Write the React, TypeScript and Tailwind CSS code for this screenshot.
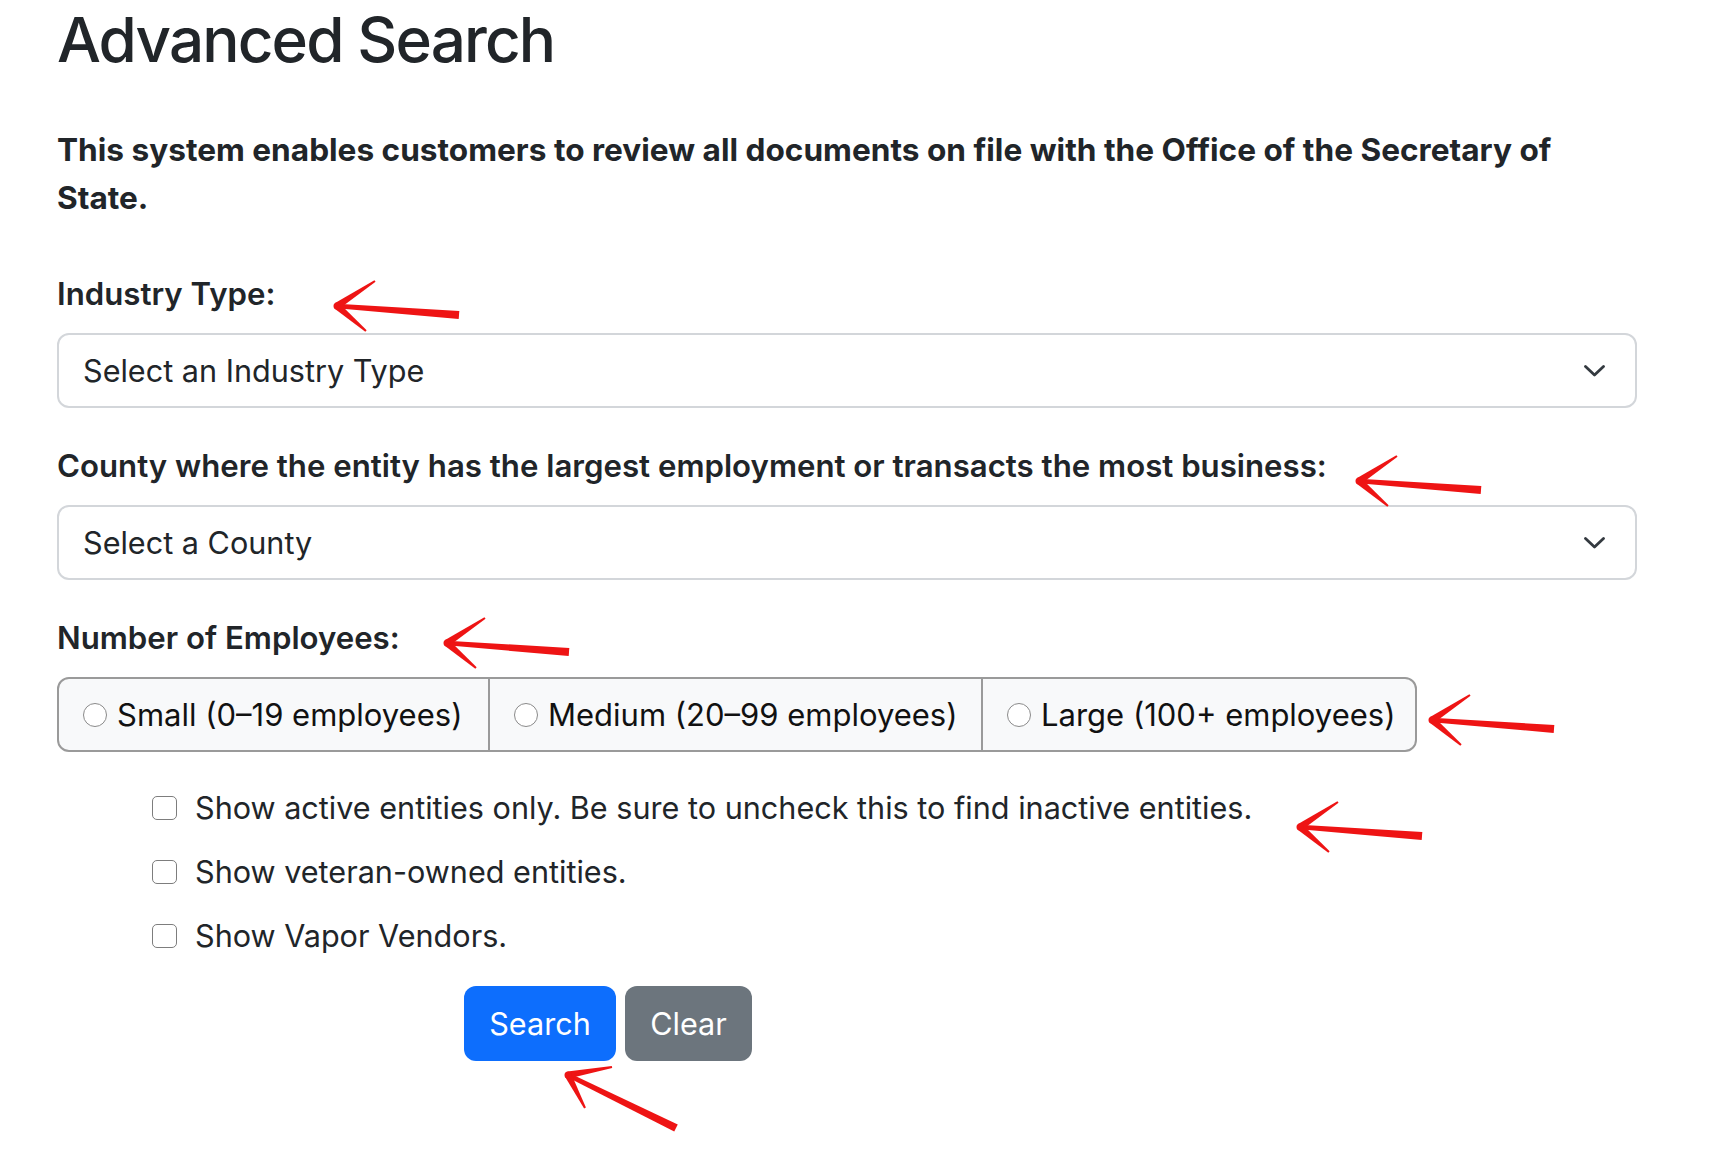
import React from "react";

type Pt = [number, number];

const STD: { tail: Pt; up: Pt; low: Pt } = {
  tail: [122, 9],
  up: [38, -25],
  low: [29, 25],
};

const arrows: { tip: Pt; tail: Pt; up: Pt; low: Pt }[] = [
  { tip: [337, 304], ...STD },
  { tip: [1359, 479], ...STD },
  { tip: [447, 641], ...STD },
  { tip: [1432, 718], ...STD },
  { tip: [1300, 825], ...STD },
  { tip: [568, 1073], tail: [108, 53], up: [44, -8], low: [17, 33] },
];

// tapered stroke, like a marker line
const seg = (a: Pt, b: Pt, wa: number, wb: number) => {
  const dx = b[0] - a[0];
  const dy = b[1] - a[1];
  const len = Math.hypot(dx, dy) || 1;
  const nx = -dy / len;
  const ny = dx / len;
  const p = [
    [a[0] + (nx * wa) / 2, a[1] + (ny * wa) / 2],
    [b[0] + (nx * wb) / 2, b[1] + (ny * wb) / 2],
    [b[0] - (nx * wb) / 2, b[1] - (ny * wb) / 2],
    [a[0] - (nx * wa) / 2, a[1] - (ny * wa) / 2],
  ];
  return p.map((q) => q.join(",")).join(" ");
};

const RedArrow = ({ tip, tail, up, low }: { tip: Pt; tail: Pt; up: Pt; low: Pt }) => {
  const at = (d: Pt): Pt => [tip[0] + d[0], tip[1] + d[1]];
  return (
    <g fill="#ee1414">
      <polygon points={seg(tip, at(tail), 4.5, 8)} />
      <polygon points={seg(tip, at(up), 7, 2)} />
      <polygon points={seg(tip, at(low), 7, 2)} />
      <circle cx={tip[0]} cy={tip[1]} r={3.5} />
    </g>
  );
};

const Chevron = () => (
  <svg width="21" height="12" viewBox="0 0 21 12" fill="none">
    <polyline
      points="1.5,1.5 10.5,10 19.5,1.5"
      stroke="#343a40"
      strokeWidth="2.8"
      strokeLinecap="round"
      strokeLinejoin="round"
    />
  </svg>
);

const SelectBox = ({ text }: { text: string }) => (
  <div className="mt-[15px] h-[75px] w-full border-2 border-[#d3d6da] rounded-[12px] bg-white flex items-center justify-between pl-[24px] pr-[30px]">
    <span className="text-[30.6px] leading-[48px]">{text}</span>
    <Chevron />
  </div>
);

const Radio = ({ label, w, first }: { label: string; w: string; first?: boolean }) => (
  <div
    className={
      "flex items-center gap-[10px] pl-[24px] h-full " +
      w +
      (first ? "" : " border-l-2 border-[#9a9a9a]")
    }
  >
    <span className="w-[24px] h-[24px] rounded-full border-[1.5px] border-[#8a8a8a] bg-white shrink-0" />
    <span className="text-[31px] leading-[48px] text-[#111] whitespace-nowrap">{label}</span>
  </div>
);

const Check = ({ label }: { label: string }) => (
  <div className="flex items-center gap-[18px] h-[48px]">
    <span className="w-[25px] h-[24px] rounded-[5px] border-[1.5px] border-[#7d7d7d] bg-white shrink-0" />
    <span className="text-[30.6px] leading-[48px]">{label}</span>
  </div>
);

export default function App() {
  return (
    <div className="relative min-h-screen w-full bg-white text-[#212529] font-['Inter','Liberation_Sans',sans-serif]">
      <div className="w-[1580px] ml-[57px]">
        <h1 className="mt-[2px] text-[62px] leading-[76px] font-medium tracking-[-0.03em]">
          Advanced Search
        </h1>
        <p className="mt-[48px] text-[31.6px] leading-[48px] font-bold">
          This system enables customers to review all documents on file with the Office of the Secretary of
          <br />
          State.
        </p>

        <div className="mt-[48px] text-[31.2px] leading-[48px] font-semibold">Industry Type:</div>
        <SelectBox text="Select an Industry Type" />

        <div className="mt-[34px] text-[31.2px] leading-[48px] font-semibold">
          County where the entity has the largest employment or transacts the most business:
        </div>
        <SelectBox text="Select a County" />

        <div className="mt-[34px] text-[31.2px] leading-[48px] font-semibold">Number of Employees:</div>
        <div className="mt-[15px] h-[75px] w-[1360px] flex border-2 border-[#9a9a9a] rounded-[12px] bg-[#f8f9fa] overflow-hidden">
          <Radio label="Small (0–19 employees)" w="w-[429px]" first />
          <Radio label="Medium (20–99 employees)" w="w-[493px]" />
          <Radio label="Large (100+ employees)" w="flex-1" />
        </div>

        <div className="mt-[32px] ml-[95px] flex flex-col gap-[16px]">
          <Check label="Show active entities only. Be sure to uncheck this to find inactive entities." />
          <Check label="Show veteran-owned entities." />
          <Check label="Show Vapor Vendors." />
        </div>

        <div className="mt-[26px] ml-[407px] flex gap-[9px]">
          <button className="w-[152px] h-[75px] rounded-[12px] bg-[#0d6efd] text-white text-[30.6px]">
            Search
          </button>
          <button className="w-[127px] h-[75px] rounded-[12px] bg-[#6c757d] text-white text-[30.6px]">
            Clear
          </button>
        </div>
      </div>

      <svg
        className="absolute left-0 top-0 pointer-events-none"
        width="1732"
        height="1170"
        viewBox="0 0 1732 1170"
      >
        {arrows.map((a, i) => (
          <RedArrow key={i} {...a} />
        ))}
      </svg>
    </div>
  );
}
